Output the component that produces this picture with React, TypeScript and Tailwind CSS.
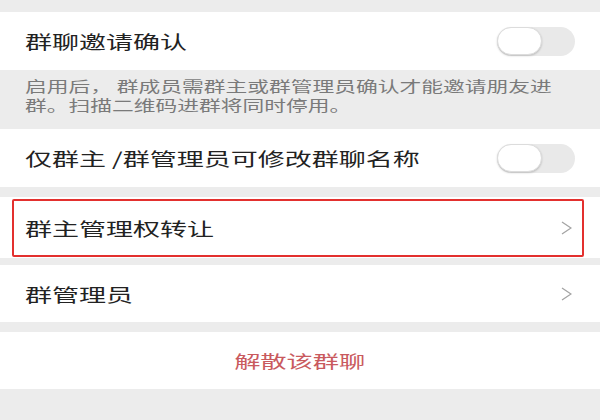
const FONT = { fontFamily: '"Noto Sans CJK SC", "Noto Sans", sans-serif' };

function Toggle() {
  return (
    <div className="relative w-[78px] h-[29px] rounded-full bg-[#e9e9e9]">
      <div className="absolute left-0 top-[0.5px] w-[45px] h-[28px] rounded-full bg-white border border-[#dcdcdc] shadow-[0_1px_2px_rgba(0,0,0,0.18)]" />
    </div>
  );
}

function Chevron() {
  return (
    <svg width="11" height="14" viewBox="0 0 11 14" fill="none">
      <polyline points="1,1 10,7 1,13" stroke="#a3a3a3" strokeWidth="1.3" strokeLinejoin="miter" />
    </svg>
  );
}

function Label({ text }: { text: string }) {
  return (
    <span className="inline-block origin-left scale-x-150 whitespace-nowrap text-[18px] leading-none text-[#222]">
      {text}
    </span>
  );
}

export default function App() {
  return (
    <div className="w-[600px] h-[420px] bg-[#ececec] overflow-hidden" style={FONT}>
      <div className="h-[12px]" />

      <div className="h-[58px] bg-white flex items-center justify-between pl-[25px] pr-[25px]">
        <Label text="群聊邀请确认" />
        <Toggle />
      </div>

      <div className="h-[59px] pt-[6px] pl-[25px] text-[14.5px] leading-[19px] text-[#7a7a7a]">
        <div className="origin-left scale-x-150 whitespace-nowrap">启用后， 群成员需群主或群管理员确认才能邀请朋友进</div>
        <div className="origin-left scale-x-150 whitespace-nowrap">群。扫描二维码进群将同时停用。</div>
      </div>

      <div className="h-[58px] bg-white flex items-center justify-between pl-[25px] pr-[25px]">
        <Label text="仅群主 /群管理员可修改群聊名称" />
        <Toggle />
      </div>

      <div className="h-[10px]" />

      <div className="h-[61px] bg-white pt-[2px] pb-[1px] pl-[12px] pr-[16px]">
        <div className="h-full border-2 border-[#e3302e] rounded-[2px] flex items-center justify-between pl-[11px] pr-[10px]">
          <Label text="群主管理权转让" />
          <Chevron />
        </div>
      </div>

      <div className="h-[7px]" />

      <div className="h-[57px] bg-white flex items-center justify-between pl-[25px] pr-[28px]">
        <Label text="群管理员" />
        <Chevron />
      </div>

      <div className="h-[10px]" />

      <div className="h-[57px] bg-white flex items-center justify-center">
        <span className="inline-block origin-center scale-x-150 whitespace-nowrap text-[17.5px] leading-none text-[#c95a5e]">
          解散该群聊
        </span>
      </div>
    </div>
  );
}
